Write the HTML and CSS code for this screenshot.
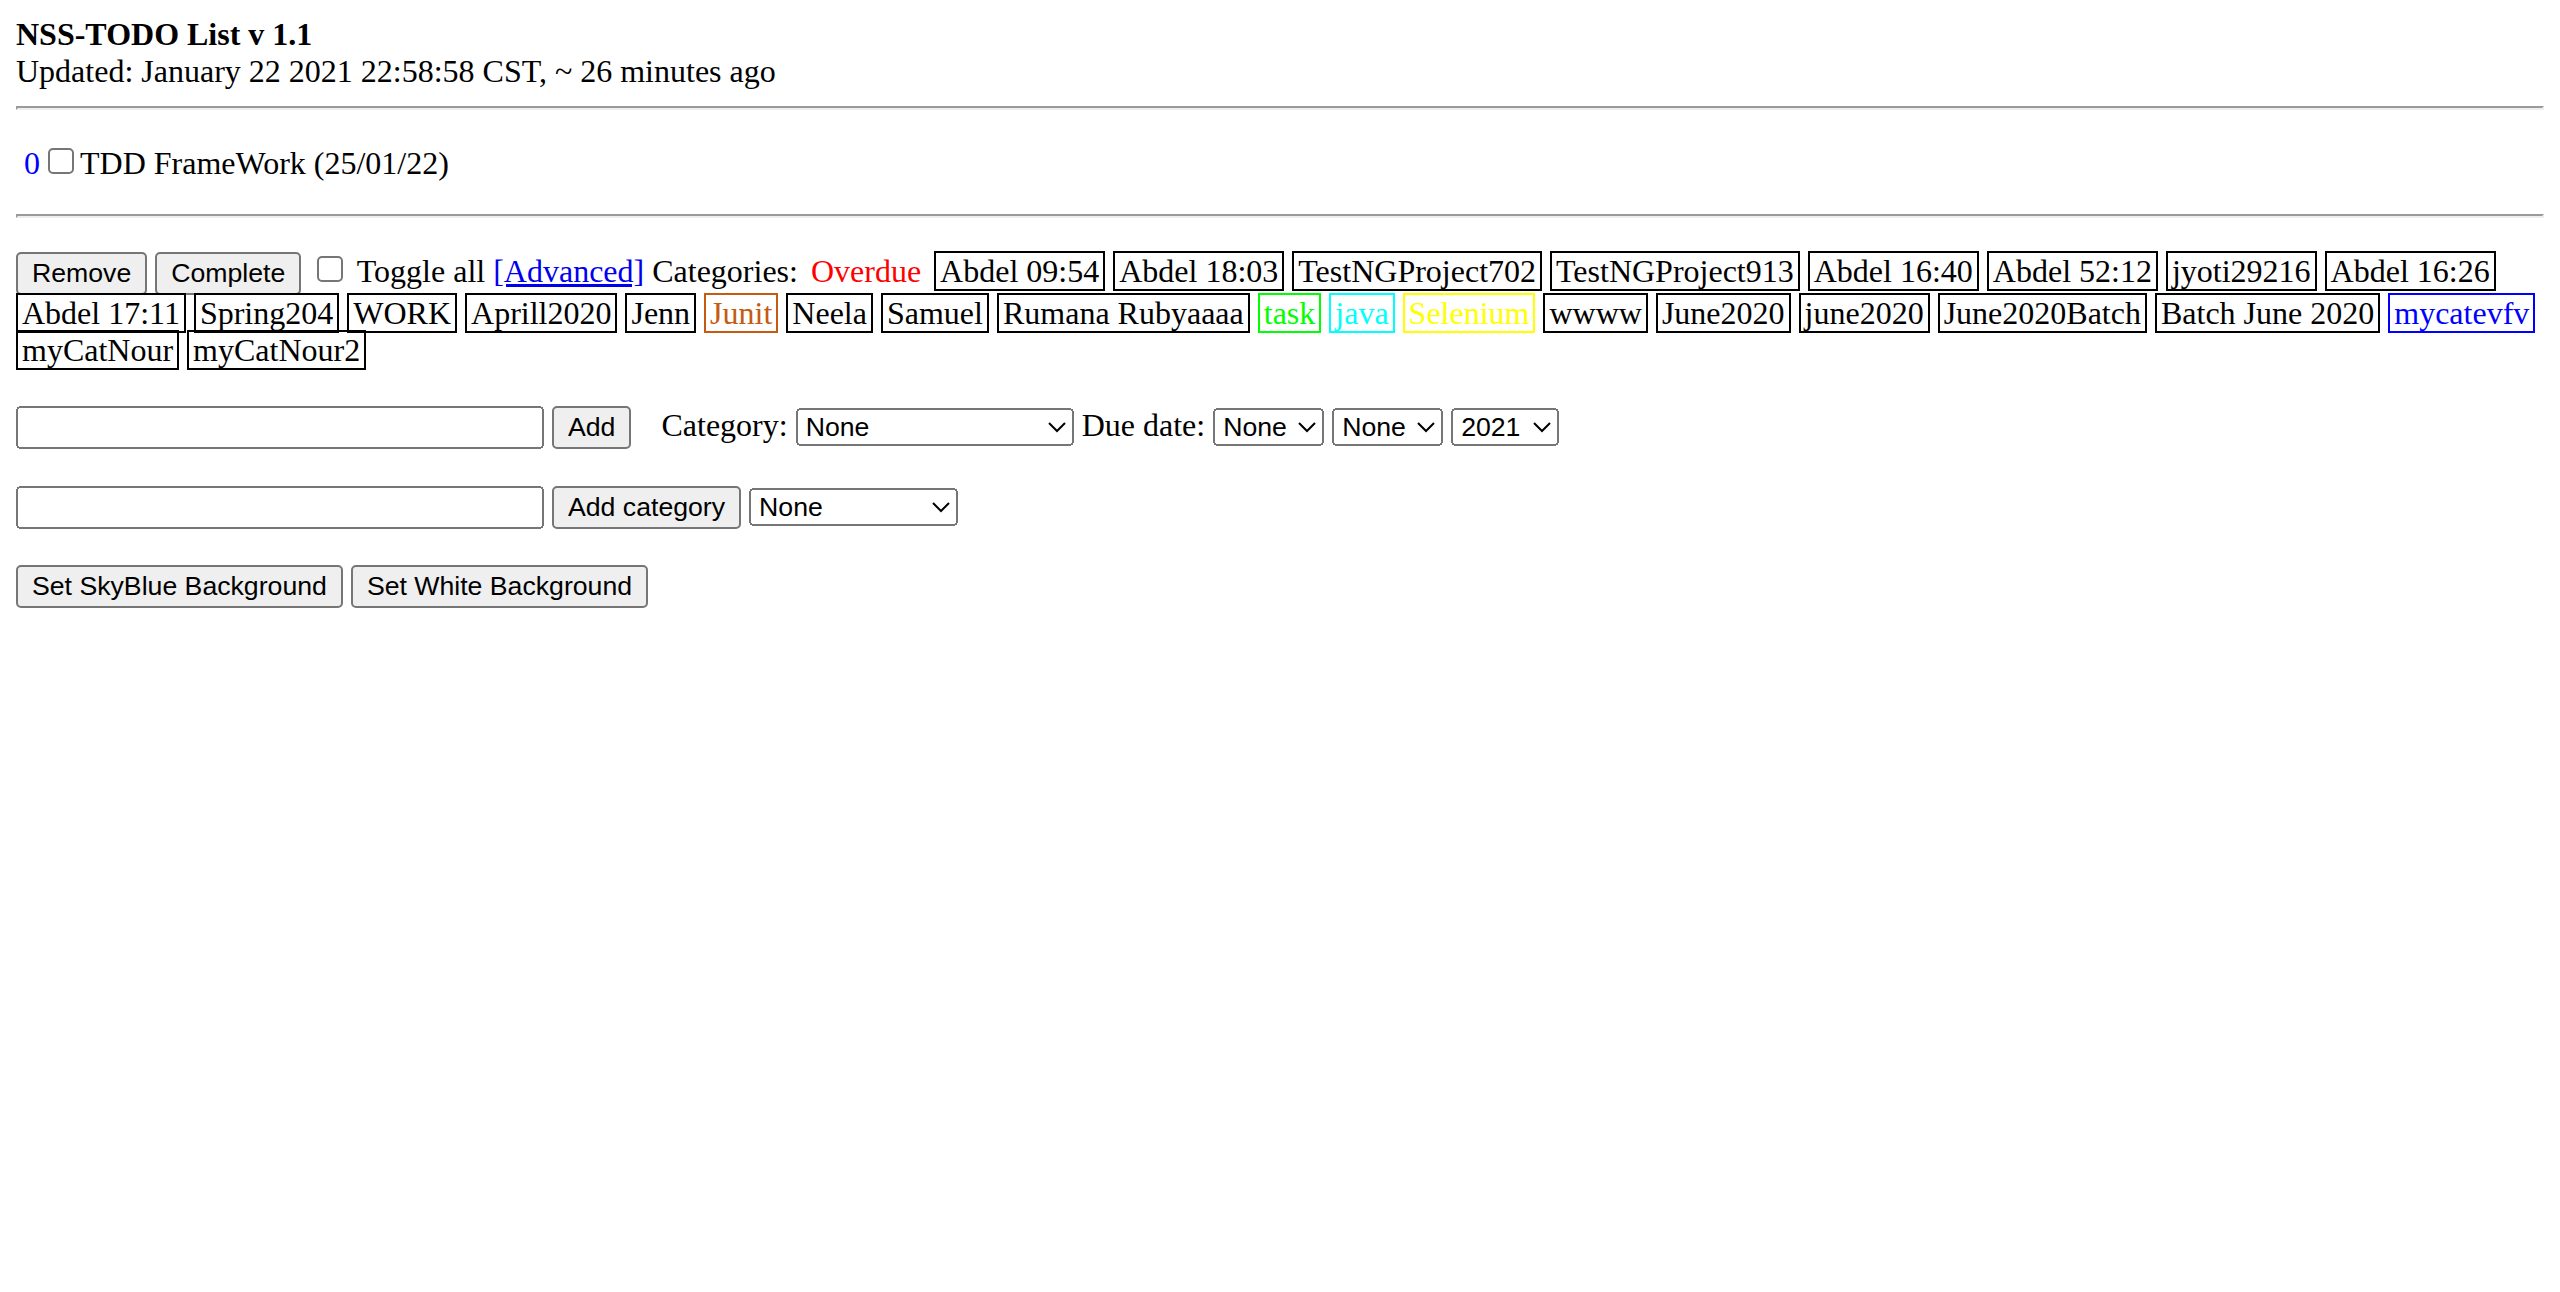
FILE: index.html
```html
<!DOCTYPE html>
<html lang="en" class="doc">
<head>
<meta charset="utf-8">
<title>NSS-TODO List v 1.1</title>
<link rel="stylesheet" href="styles.css">
</head>
<body class="page">
<div class="header"><b class="title">NSS-TODO List v 1.1</b><br>Updated: January 22 2021 22:58:58 CST, ~ 26 minutes ago</div>
<hr class="rule">
<form class="todo-form" action="#">
<p class="todo-item"><span class="todo-index">0</span><input type="checkbox" class="check">TDD FrameWork (25/01/22)</p>
<hr class="rule">
<p class="toolbar"><button type="button" class="btn">Remove</button> <button type="button" class="btn">Complete</button> <input type="checkbox" class="check"> Toggle all <a href="#" class="advanced">[Advanced]</a> Categories: <span class="cat cat-overdue">Overdue</span> <span class="cat">Abdel 09:54</span> <span class="cat">Abdel 18:03</span> <span class="cat">TestNGProject702</span> <span class="cat">TestNGProject913</span> <span class="cat">Abdel 16:40</span> <span class="cat">Abdel 52:12</span> <span class="cat">jyoti29216</span> <span class="cat">Abdel 16:26</span> <span class="cat">Abdel 17:11</span> <span class="cat">Spring204</span> <span class="cat">WORK</span> <span class="cat">Aprill2020</span> <span class="cat">Jenn</span> <span class="cat cat-junit">Junit</span> <span class="cat">Neela</span> <span class="cat">Samuel</span> <span class="cat">Rumana Rubyaaaa</span> <span class="cat cat-task">task</span> <span class="cat cat-java">java</span> <span class="cat cat-selenium">Selenium</span> <span class="cat">wwww</span> <span class="cat">June2020</span> <span class="cat">june2020</span> <span class="cat">June2020Batch</span> <span class="cat">Batch June 2020</span> <span class="cat cat-blue">mycatevfv</span> <span class="cat">myCatNour</span> <span class="cat">myCatNour2</span></p>
<p class="row"><input type="text" class="text-field"> <button type="button" class="btn">Add</button> <span class="field-label">Category:</span> <select class="sel sel-category"><option>None</option></select> Due date: <select class="sel sel-day"><option>None</option></select> <select class="sel sel-month"><option>None</option></select> <select class="sel sel-year"><option>2021</option></select></p>
<p class="row"><input type="text" class="text-field"> <button type="button" class="btn">Add category</button> <select class="sel sel-cat2"><option>None</option></select></p>
<p class="row"><button type="button" class="btn">Set SkyBlue Background</button> <button type="button" class="btn">Set White Background</button></p>
</form>
</body>
</html>
```
FILE: styles.css
```css
.doc {
  zoom: 2;
}

.page {
  margin: 8px;
  font-family: "Liberation Serif", "Times New Roman", serif;
  font-size: 16px;
  color: #000;
  background: #fff;
}

.title {
  font-weight: bold;
}

.rule {
  margin: 8px 0;
}

.todo-form {
  margin: 0;
}

.todo-item {
  padding-left: 4px;
}

.todo-index {
  color: #0000ff;
}

.check {
  margin: 3px 3px 3px 4px;
}

.advanced {
  color: #0000ee;
  text-decoration: underline;
}

.cat {
  border: 1px solid #000;
  padding: 0 2px;
}

.cat-overdue {
  color: #ff0000;
  border-color: transparent;
  padding: 0 1.5px;
}

.cat-junit {
  color: #c55a11;
  border-color: #c55a11;
}

.cat-task {
  color: #00ff00;
  border-color: #00ff00;
}

.cat-java {
  color: #00ffff;
  border-color: #00ffff;
}

.cat-selenium {
  color: #ffff00;
  border-color: #ffff00;
}

.cat-blue {
  color: #0000ff;
  border-color: #0000ff;
}

.row {
  margin: 18.4px 0;
}

.btn,
.text-field,
.sel {
  font-family: "Liberation Sans", Arial, sans-serif;
  font-size: 13.333px;
}

.text-field {
  width: 256px;
}

.field-label {
  margin-left: 11px;
}

.sel-category {
  width: 139px;
}

.sel-day,
.sel-month {
  width: 55.5px;
}

.sel-year {
  width: 54px;
}

.sel-cat2 {
  width: 104.5px;
}
```
